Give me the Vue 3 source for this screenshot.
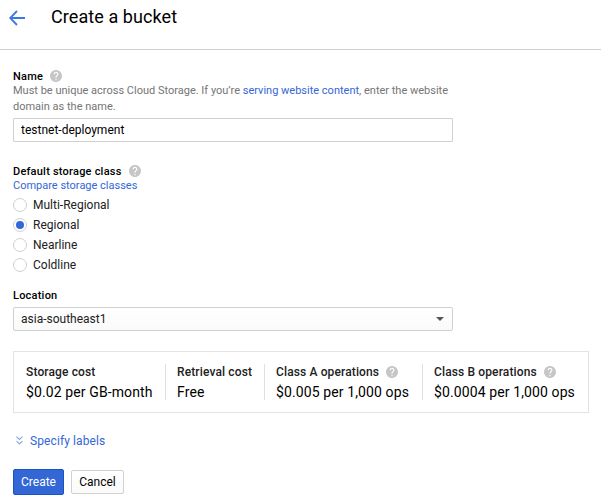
<script setup>
import { ref, h } from 'vue'

const name = ref('testnet-deployment')
const storageClass = ref('Regional')
const classes = ['Multi-Regional', 'Regional', 'Nearline', 'Coldline']
const costs = [
  { key: 'storage', label: 'Storage cost', value: '$0.02 per GB-month' },
  { key: 'retrieval', label: 'Retrieval cost', value: 'Free' },
  { key: 'class-a', label: 'Class A operations', value: '$0.005 per 1,000 ops', help: true },
  { key: 'class-b', label: 'Class B operations', value: '$0.0004 per 1,000 ops', help: true },
]

const HelpIcon = () =>
  h('svg', { width: 12, height: 12, viewBox: '2 2 20 20' }, [
    h('path', {
      fill: '#c6c6c6',
      d: 'M12 2C6.48 2 2 6.48 2 12s4.48 10 10 10 10-4.48 10-10S17.52 2 12 2zm1 17h-2v-2h2v2zm2.07-7.75l-.9.92C13.45 12.9 13 13.5 13 15h-2v-.5c0-1.1.45-2.1 1.17-2.83l1.24-1.26c.37-.36.59-.86.59-1.41 0-1.1-.9-2-2-2s-2 .9-2 2H8c0-2.21 1.79-4 4-4s4 1.79 4 4c0 .88-.36 1.68-.93 2.25z',
    }),
  ])
</script>

<template>
  <div class="page">
    <header class="header">
      <svg class="back" width="16" height="16" viewBox="0 0 16 16">
        <path d="M16 8H1.5M8 1L1.2 8L8 15" fill="none" stroke="#3b78e7" stroke-width="1.8" />
      </svg>
      <h1>Create a bucket</h1>
    </header>

    <form class="form" @submit.prevent>
      <section class="name-field">
        <div class="label">Name <HelpIcon class="help" /></div>
        <p class="hint">
          Must be unique across Cloud Storage. If you’re <a>serving website content</a>, enter the website
          domain as the name.
        </p>
        <input v-model="name" class="text-input" type="text" />
      </section>

      <section class="class-field">
        <div class="label">Default storage class <HelpIcon class="help" /></div>
        <a class="compare">Compare storage classes</a>
        <label v-for="c in classes" :key="c" class="option">
          <input v-model="storageClass" type="radio" name="class" :value="c" />
          <span>{{ c }}</span>
        </label>
      </section>

      <section class="location-field">
        <div class="label">Location</div>
        <div class="select">
          <span>asia-southeast1</span>
          <svg width="8" height="4" viewBox="0 0 8 4"><path d="M0 0H8L4 4Z" fill="#555" /></svg>
        </div>
      </section>

      <section class="costs">
        <div v-for="c in costs" :key="c.key" class="cost" :class="c.key">
          <div class="cost-label">{{ c.label }} <HelpIcon v-if="c.help" class="help" /></div>
          <div class="cost-value">{{ c.value }}</div>
        </div>
      </section>

      <a class="labels-link">
        <svg width="7" height="9" viewBox="0 0 7 9">
          <path d="M.5 .6L3.5 3.4L6.5 .6M.5 5.2L3.5 8L6.5 5.2" fill="none" stroke="#86a5e4" stroke-width="1.1" />
        </svg>
        <span>Specify labels</span>
      </a>

      <div class="actions">
        <button class="create">Create</button>
        <button class="cancel">Cancel</button>
      </div>
    </form>
  </div>
</template>

<style>
body {
  margin: 0;
  background: #fff;
}
</style>

<style scoped>
.page {
  height: 502px;
  overflow: hidden;
  font-family: Roboto, sans-serif;
  font-size: 12px;
  color: #212121;
}
.page * {
  box-sizing: border-box;
}
.header {
  display: flex;
  align-items: flex-start;
  height: 50px;
  padding-left: 9px;
  border-bottom: 1px solid #d0d0d0;
}
.back {
  margin-top: 10px;
}
h1 {
  margin: 5px 0 0 26px;
  font-size: 18px;
  line-height: 24px;
  font-weight: 400;
  letter-spacing: 0.08px;
  color: #000;
}
.form {
  padding: 19px 12px 0 13px;
}
a {
  color: #3367d6;
}
.label {
  display: flex;
  align-items: center;
  height: 14px;
  font-size: 11px;
  font-weight: 500;
  letter-spacing: 0.22px;
  color: #000;
}
.help {
  margin-left: 7px;
}
.hint {
  width: 440px;
  margin: 0 0 3px;
  font-size: 11px;
  line-height: 16px;
  color: #757575;
}
.text-input {
  display: block;
  width: 440px;
  height: 24px;
  padding: 0 7px;
  border: 1px solid #d0d0d0;
  border-radius: 1px;
  outline: none;
  font: inherit;
  color: #000;
}
.class-field {
  display: flex;
  flex-direction: column;
  margin-top: 22px;
}
.compare {
  height: 17px;
  font-size: 11px;
  line-height: 16px;
}
.option {
  display: flex;
  align-items: center;
  height: 20px;
}
.option input {
  display: grid;
  place-items: center;
  appearance: none;
  width: 14px;
  height: 14px;
  margin: 0 6px 0 0;
  border: 1px solid #d0d0d0;
  border-radius: 50%;
}
.option input:checked::before {
  content: '';
  width: 8px;
  height: 8px;
  border-radius: 50%;
  background: #3367d6;
}
.location-field {
  margin-top: 13px;
}
.select {
  display: flex;
  align-items: center;
  justify-content: space-between;
  width: 440px;
  height: 24px;
  margin-top: 5px;
  padding: 0 8px 0 7px;
  border: 1px solid #d0d0d0;
  border-radius: 2px;
  background: linear-gradient(#fff, #fafafa);
}
.costs {
  display: flex;
  width: 576px;
  height: 62px;
  margin-top: 20px;
  padding: 12px 0;
  border: 1px solid #e3e3e3;
}
.cost {
  padding-left: 12px;
  white-space: nowrap;
}
.cost + .cost {
  padding-left: 11px;
  border-left: 1px solid #e0e0e0;
}
.storage {
  width: 151px;
}
.retrieval {
  width: 99px;
}
.class-a {
  width: 158px;
}
.cost-label {
  display: flex;
  align-items: center;
  height: 16px;
  font-weight: 500;
  letter-spacing: 0.13px;
}
.cost-value {
  margin-top: 3px;
  font-size: 14px;
  line-height: 18px;
  letter-spacing: 0.11px;
  color: #000;
}
.labels-link {
  display: flex;
  align-items: center;
  height: 16px;
  margin-top: 20px;
  padding-left: 3px;
  gap: 7px;
  letter-spacing: 0.1px;
}
.labels-link svg {
  margin-top: -2px;
}
.actions {
  display: flex;
  align-items: center;
  gap: 7px;
  margin-top: 20px;
}
button {
  padding: 0;
  border-radius: 2px;
  font: inherit;
}
.create {
  width: 51px;
  height: 26px;
  border: 1px solid #1a53c6;
  background: #3367d6;
  color: #fff;
}
.cancel {
  width: 53px;
  height: 24px;
  border: 1px solid #d0d0d0;
  background: linear-gradient(#fff, #fafafa);
  color: #000;
}
</style>
